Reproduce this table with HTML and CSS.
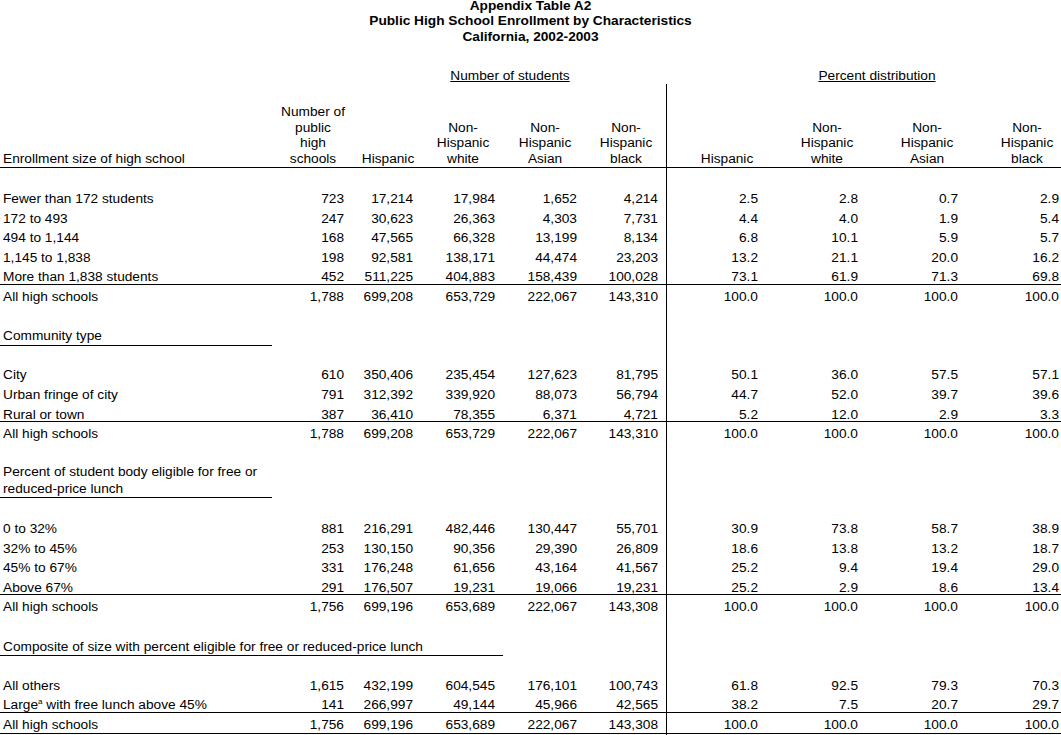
FILE: index.html
```html
<!DOCTYPE html>
<html lang="en">
<head>
<meta charset="utf-8">
<title>Appendix Table A2</title>
<link rel="stylesheet" href="styles.css">
</head>
<body>
<div class="page">
  <header class="title">
    <div>Appendix Table A2</div>
    <div>Public High School Enrollment by Characteristics</div>
    <div>California, 2002-2003</div>
  </header>

  <div class="groups">
    <div class="g-students"><span>Number of students</span></div>
    <div class="g-percent"><span>Percent distribution</span></div>
  </div>

  <div class="sheet">
    <div class="row head">
      <div class="lab">Enrollment size of high school</div>
      <div class="h h1">Number of<br>public<br>high<br>schools</div>
      <div class="h">Hispanic</div>
      <div class="h">Non-<br>Hispanic<br>white</div>
      <div class="h">Non-<br>Hispanic<br>Asian</div>
      <div class="h h5">Non-<br>Hispanic<br>black</div>
      <div class="h h6">Hispanic</div>
      <div class="h">Non-<br>Hispanic<br>white</div>
      <div class="h h8">Non-<br>Hispanic<br>Asian</div>
      <div class="h h9">Non-<br>Hispanic<br>black</div>
    </div>

    <div class="row"></div>
    <div class="row data"><div>Fewer than 172 students</div><div>723</div><div>17,214</div><div>17,984</div><div>1,652</div><div>4,214</div><div>2.5</div><div>2.8</div><div>0.7</div><div>2.9</div></div>
    <div class="row data"><div>172 to 493</div><div>247</div><div>30,623</div><div>26,363</div><div>4,303</div><div>7,731</div><div>4.4</div><div>4.0</div><div>1.9</div><div>5.4</div></div>
    <div class="row data"><div>494 to 1,144</div><div>168</div><div>47,565</div><div>66,328</div><div>13,199</div><div>8,134</div><div>6.8</div><div>10.1</div><div>5.9</div><div>5.7</div></div>
    <div class="row data"><div>1,145 to 1,838</div><div>198</div><div>92,581</div><div>138,171</div><div>44,474</div><div>23,203</div><div>13.2</div><div>21.1</div><div>20.0</div><div>16.2</div></div>
    <div class="row data rule"><div>More than 1,838 students</div><div>452</div><div>511,225</div><div>404,883</div><div>158,439</div><div>100,028</div><div>73.1</div><div>61.9</div><div>71.3</div><div>69.8</div></div>
    <div class="row data"><div>All high schools</div><div>1,788</div><div>699,208</div><div>653,729</div><div>222,067</div><div>143,310</div><div>100.0</div><div>100.0</div><div>100.0</div><div>100.0</div></div>

    <div class="row"></div>
    <div class="row"><div class="sec">Community type</div></div>
    <div class="row"></div>
    <div class="row data"><div>City</div><div>610</div><div>350,406</div><div>235,454</div><div>127,623</div><div>81,795</div><div>50.1</div><div>36.0</div><div>57.5</div><div>57.1</div></div>
    <div class="row data"><div>Urban fringe of city</div><div>791</div><div>312,392</div><div>339,920</div><div>88,073</div><div>56,794</div><div>44.7</div><div>52.0</div><div>39.7</div><div>39.6</div></div>
    <div class="row data rule"><div>Rural or town</div><div>387</div><div>36,410</div><div>78,355</div><div>6,371</div><div>4,721</div><div>5.2</div><div>12.0</div><div>2.9</div><div>3.3</div></div>
    <div class="row data"><div>All high schools</div><div>1,788</div><div>699,208</div><div>653,729</div><div>222,067</div><div>143,310</div><div>100.0</div><div>100.0</div><div>100.0</div><div>100.0</div></div>

    <div class="row"></div>
    <div class="row tall"><div class="sec sec2">Percent of student body eligible for free or<br>reduced-price lunch</div></div>
    <div class="row"></div>
    <div class="row data"><div>0 to 32%</div><div>881</div><div>216,291</div><div>482,446</div><div>130,447</div><div>55,701</div><div>30.9</div><div>73.8</div><div>58.7</div><div>38.9</div></div>
    <div class="row data"><div>32% to 45%</div><div>253</div><div>130,150</div><div>90,356</div><div>29,390</div><div>26,809</div><div>18.6</div><div>13.8</div><div>13.2</div><div>18.7</div></div>
    <div class="row data"><div>45% to 67%</div><div>331</div><div>176,248</div><div>61,656</div><div>43,164</div><div>41,567</div><div>25.2</div><div>9.4</div><div>19.4</div><div>29.0</div></div>
    <div class="row data rule"><div>Above 67%</div><div>291</div><div>176,507</div><div>19,231</div><div>19,066</div><div>19,231</div><div>25.2</div><div>2.9</div><div>8.6</div><div>13.4</div></div>
    <div class="row data"><div>All high schools</div><div>1,756</div><div>699,196</div><div>653,689</div><div>222,067</div><div>143,308</div><div>100.0</div><div>100.0</div><div>100.0</div><div>100.0</div></div>

    <div class="row"></div>
    <div class="row"><div class="sec wide">Composite of size with percent eligible for free or reduced-price lunch</div></div>
    <div class="row"></div>
    <div class="row data"><div>All others</div><div>1,615</div><div>432,199</div><div>604,545</div><div>176,101</div><div>100,743</div><div>61.8</div><div>92.5</div><div>79.3</div><div>70.3</div></div>
    <div class="row data rule"><div>Large<sup>a</sup> with free lunch above 45%</div><div>141</div><div>266,997</div><div>49,144</div><div>45,966</div><div>42,565</div><div>38.2</div><div>7.5</div><div>20.7</div><div>29.7</div></div>
    <div class="row data rule last"><div>All high schools</div><div>1,756</div><div>699,196</div><div>653,689</div><div>222,067</div><div>143,308</div><div>100.0</div><div>100.0</div><div>100.0</div><div>100.0</div></div>
  </div>
</div>
</body>
</html>
```

FILE: styles.css
```css
* { box-sizing: border-box; }

html { overflow: hidden; background: #fff; }

body {
  margin: 0;
  color: #000;
  font-family: "Liberation Sans", Arial, sans-serif;
  font-size: 13.7px;
}

.page {
  width: 1061px;
  --cols: 272px 76px 80px 70px 94px 74px 124px 74px 128px 69px;
}

.title {
  margin-top: -2.3px;
  text-align: center;
  font-weight: bold;
  line-height: 15.6px;
}

.groups {
  display: grid;
  grid-template-columns: var(--cols);
  margin-top: 23.45px;
  height: 15.6px;
  line-height: 15.6px;
  text-align: center;
}

.groups span { text-decoration: underline; }

.g-students { grid-column: 3 / 7; padding-left: 6px; }
.g-percent { grid-column: 7 / 11; padding-left: 27px; }

.sheet {
  padding-bottom: 4px;
  background: linear-gradient(#000, #000) no-repeat 666px 0 / 1px 100%;
}

.row {
  display: grid;
  grid-template-columns: var(--cols);
  height: 19.6px;
}

.row > div {
  padding-top: 3px;
  line-height: 17.6px;
  white-space: nowrap;
}

.row.rule { border-bottom: 1px solid #000; }

.row.last { height: 21px; }

.row.head {
  height: 84px;
  align-items: end;
  border-bottom: 1px solid #000;
}

.row.head > div {
  padding-top: 0;
  padding-bottom: 0;
  line-height: 15.6px;
}

.head .lab { padding-left: 3px; }
.head .h { text-align: center; }
.head .h1 { padding-left: 6px; }
.head .h5 { padding-right: 6px; }
.head .h6 { padding-right: 2px; }
.head .h8 { padding-right: 2px; }
.head .h9 { padding-left: 1px; }

.data > div { text-align: right; }
.data > div:nth-child(1) { text-align: left; padding-left: 3px; }
.data > div:nth-child(2) { padding-right: 4px; }
.data > div:nth-child(3) { padding-right: 15px; }
.data > div:nth-child(4) { padding-right: 3px; }
.data > div:nth-child(5) { padding-right: 15px; }
.data > div:nth-child(6) { padding-right: 8px; }
.data > div:nth-child(7) { padding-right: 32px; }
.data > div:nth-child(8) { padding-right: 6px; }
.data > div:nth-child(9) { padding-right: 34px; }
.data > div:nth-child(10) { padding-right: 2px; }

.sec {
  grid-column: 1 / 2;
  padding-left: 3px;
  border-bottom: 1px solid #000;
}

.row.tall { height: 36.1px; }

.row > .sec2 { line-height: 17px; padding-top: 2px; }

.sec.wide {
  grid-column: 1 / 6;
  justify-self: start;
  width: 503px;
}

sup {
  font-size: 8px;
  line-height: 0;
  vertical-align: 5px;
}
```
